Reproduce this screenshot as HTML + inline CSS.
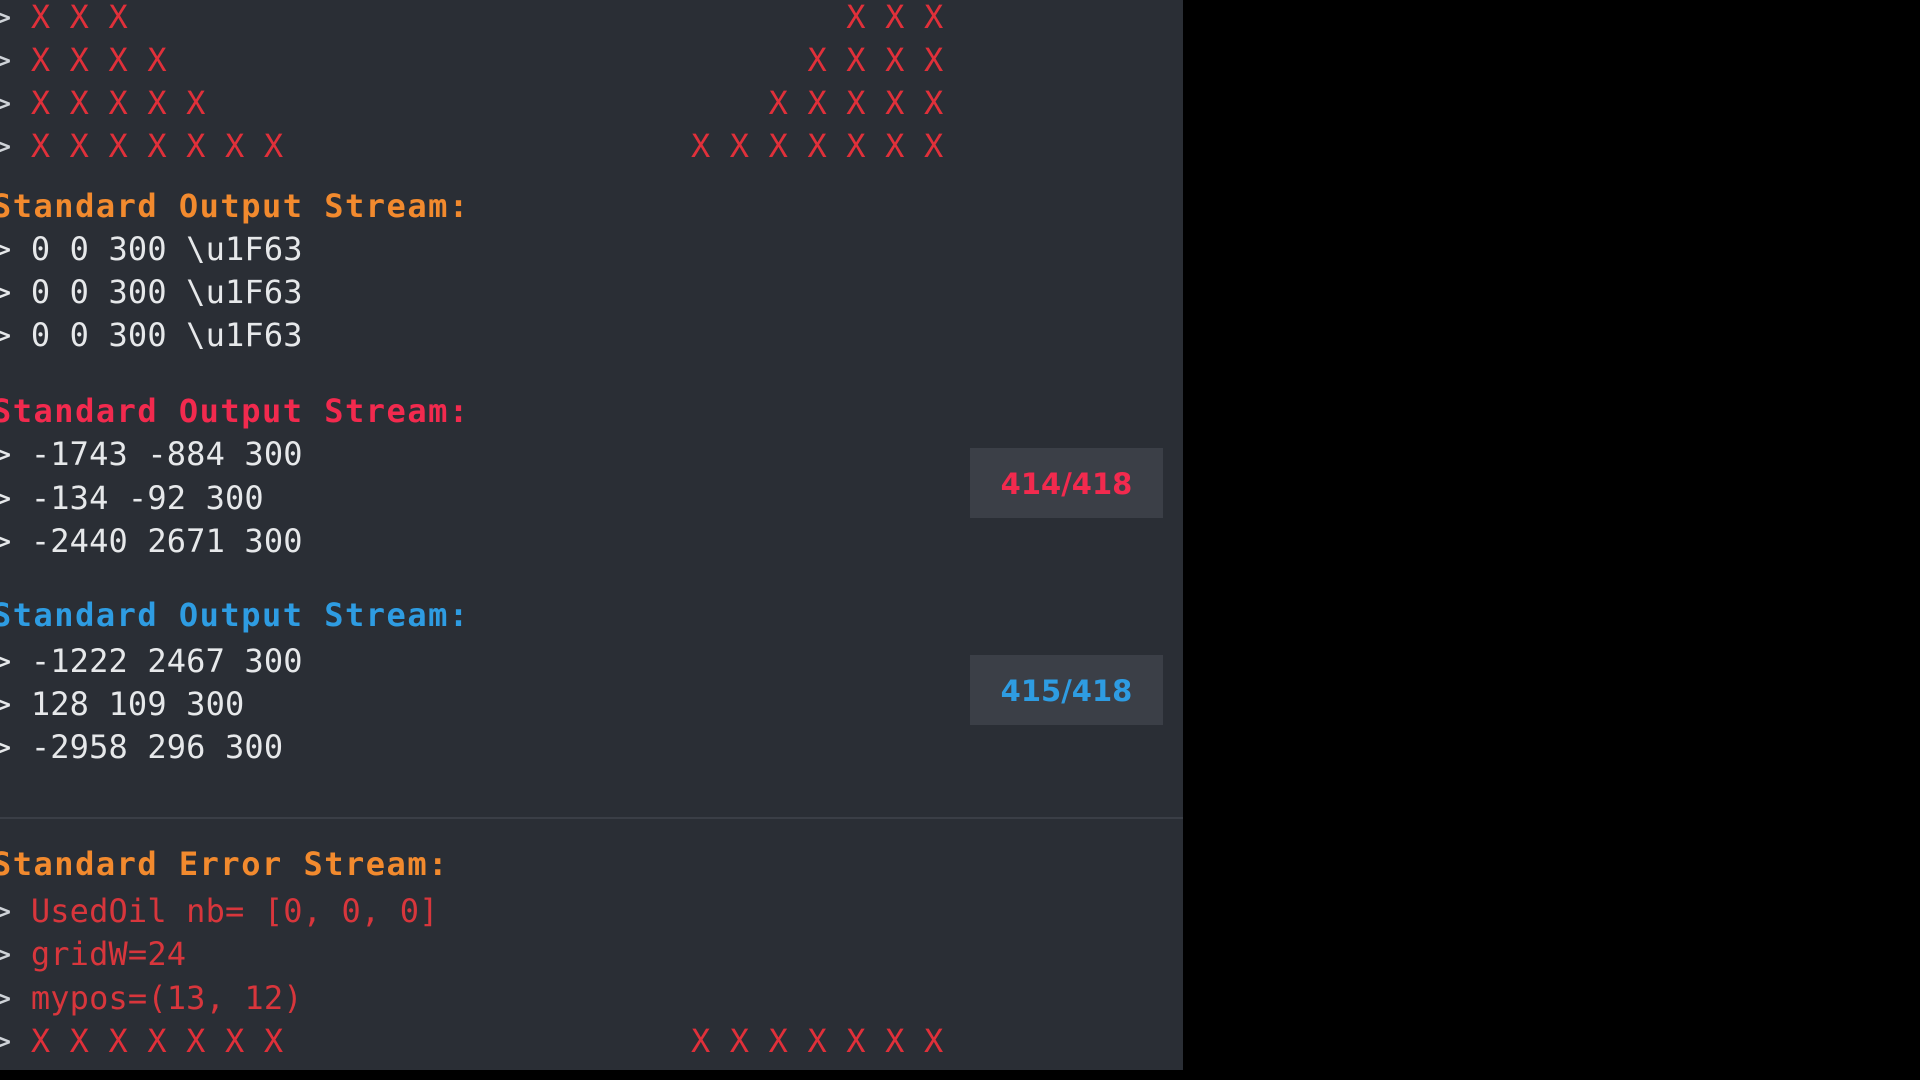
<!DOCTYPE html>
<html><head><style>
html,body{margin:0;padding:0;background:#000;width:1920px;height:1080px;overflow:hidden}
#p{position:absolute;left:0;top:0;width:1183px;height:1070px;background:#2a2e35;overflow:hidden}
.l{position:absolute;left:-8px;white-space:pre;font-family:"DejaVu Sans Mono","Liberation Mono",monospace;font-size:32px;line-height:40px;color:#e6e8ea;letter-spacing:0.15px}
.x{color:#e0303a}.o{color:#f28a2e;font-weight:bold;letter-spacing:1.5px}.r{color:#f22a4e;font-weight:bold;letter-spacing:1.5px}.b{color:#2e9ce2;font-weight:bold;letter-spacing:1.5px}.e{color:#d8363c}
.g{color:#cfd3d8}
.badge{position:absolute;left:970px;width:193px;height:70px;background:#3b3f47;font-family:"DejaVu Sans","Liberation Sans",sans-serif;font-weight:bold;font-size:29px;line-height:72px;text-align:center}
#hr{position:absolute;left:0;top:817px;width:1183px;height:2px;background:#3a3e46}
</style></head><body><div id="p">
<div class="l" style="top:-3px"><span class="g">&gt;</span><span class="x"> X X X                                     X X X</span></div>
<div class="l" style="top:40px"><span class="g">&gt;</span><span class="x"> X X X X                                 X X X X</span></div>
<div class="l" style="top:83px"><span class="g">&gt;</span><span class="x"> X X X X X                             X X X X X</span></div>
<div class="l" style="top:126px"><span class="g">&gt;</span><span class="x"> X X X X X X X                     X X X X X X X</span></div>
<div class="l o" style="top:186px">Standard Output Stream:</div>
<div class="l" style="top:229px">&gt; 0 0 300 \u1F63</div>
<div class="l" style="top:272px">&gt; 0 0 300 \u1F63</div>
<div class="l" style="top:315px">&gt; 0 0 300 \u1F63</div>
<div class="l r" style="top:391px">Standard Output Stream:</div>
<div class="l" style="top:434px">&gt; -1743 -884 300</div>
<div class="l" style="top:478px">&gt; -134 -92 300</div>
<div class="l" style="top:521px">&gt; -2440 2671 300</div>
<div class="l b" style="top:595px">Standard Output Stream:</div>
<div class="l" style="top:641px">&gt; -1222 2467 300</div>
<div class="l" style="top:684px">&gt; 128 109 300</div>
<div class="l" style="top:727px">&gt; -2958 296 300</div>
<div id="hr"></div>
<div class="l o" style="top:844px">Standard Error Stream:</div>
<div class="l" style="top:891px"><span class="g">&gt;</span><span class="e"> UsedOil nb= [0, 0, 0]</span></div>
<div class="l" style="top:934px"><span class="g">&gt;</span><span class="e"> gridW=24</span></div>
<div class="l" style="top:978px"><span class="g">&gt;</span><span class="e"> mypos=(13, 12)</span></div>
<div class="l" style="top:1021px"><span class="g">&gt;</span><span class="x"> X X X X X X X                     X X X X X X X</span></div>
<div class="badge" style="top:448px;color:#f22a4e">414/418</div>
<div class="badge" style="top:655px;color:#2e9ce2">415/418</div>
</div></body></html>
